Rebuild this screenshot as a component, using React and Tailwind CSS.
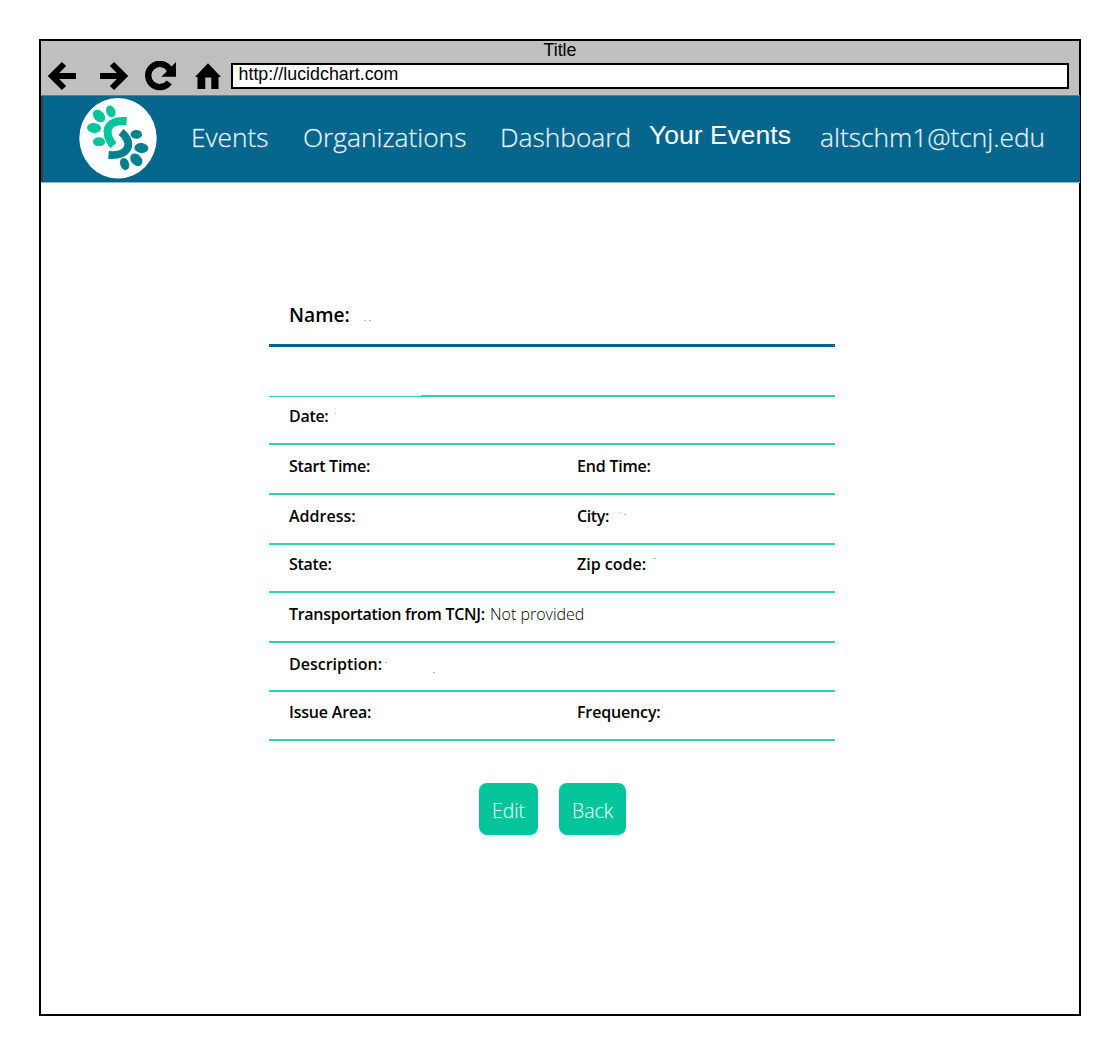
const NAV = "font-['Open_Sans'] font-light text-[26.3px] leading-[36px] text-white/90 whitespace-nowrap [-webkit-text-stroke:0.35px_rgba(255,255,255,0.6)]";

function BrowserIcon({ className, viewBox, children }) {
  return (
    <svg className={className} viewBox={viewBox} fill="none" stroke="#000" strokeWidth="6">
      {children}
    </svg>
  );
}

function Logo() {
  return (
    <svg className="h-[82px] w-[80px] shrink-0" viewBox="78 97 80 82">
      <ellipse cx="118" cy="138.2" rx="38.7" ry="40.3" fill="#fff" />
      <g fill="#03c49b">
        <ellipse cx="99" cy="116" rx="5.2" ry="7.1" transform="rotate(-42 99 116)" />
        <ellipse cx="110.8" cy="111.5" rx="4.5" ry="6.2" transform="rotate(-22 110.8 111.5)" />
        <ellipse cx="94" cy="128" rx="7" ry="5" transform="rotate(6 94 128)" />
        <ellipse cx="99" cy="141.7" rx="6.1" ry="4.5" />
      </g>
      <path d="M126.7 121C112.500 120 107.3 125.5 107.600 132Q108 139.500 113.500 145.500" fill="none" stroke="#03c49b" strokeWidth="8" />
      <g fill="#028090">
        <ellipse cx="136.3" cy="134.4" rx="5.7" ry="4.3" />
        <ellipse cx="141.4" cy="148" rx="7" ry="5" transform="rotate(6 141.4 148)" />
        <ellipse cx="136.3" cy="159.8" rx="5.2" ry="7.1" transform="rotate(-42 136.3 159.8)" />
        <ellipse cx="124.6" cy="164" rx="4.4" ry="6.2" transform="rotate(-20 124.6 164)" />
      </g>
      <path d="M121 132C128 137.500 130.200 144.500 126.700 149.500Q122 156 108.500 155" fill="none" stroke="#028090" strokeWidth="7.8" />
    </svg>
  );
}

function Label({ children, className = "" }) {
  return <span className={`font-semibold whitespace-nowrap ${className}`}>{children}</span>;
}

// Tiny residue of an erased value, drawn over the row.
function Speck({ className }) {
  return <i className={`absolute h-px w-[2px] bg-[#c4b8ac] ${className}`} />;
}

function Row({ className, children }) {
  return (
    <div className={`relative flex border-b-2 border-[#35cfae] pl-[20px] text-[16px] leading-[20px] text-black ${className}`}>
      {children}
    </div>
  );
}

export default function App() {
  return (
    <div className="h-[1055px] w-[1120px] bg-white pt-[39px] pl-[39px] font-['Open_Sans',sans-serif]">
      <div className="h-[977px] w-[1042px] border-2 border-black">
        <div className="h-[54px] bg-[#bfbfbf] font-['Liberation_Sans',sans-serif] text-[17.78px] text-black">
          <div className="h-[22px] pt-[1px] pl-[502.5px] leading-[16px]"><span>Title</span></div>
          <div className="flex">
            <BrowserIcon className="ml-[6px] mt-[-2px] h-[30px] w-[30px] shrink-0" viewBox="47 61 30 30">
              <path d="M76 76H52M64 64L52 76L64 88" />
            </BrowserIcon>
            <BrowserIcon className="ml-[22px] mt-[-2px] h-[30px] w-[30px] shrink-0" viewBox="99 61 30 30">
              <path d="M100 76H124M112 64L124 76L112 88" />
            </BrowserIcon>
            <BrowserIcon className="ml-[15px] mt-[-2px] h-[30px] w-[34px] shrink-0" viewBox="144 61 34 30">
              <path d="M169.200 82.300A11.600 11.600 0 1 1 169.800 69.600" strokeWidth="6.4" />
              <path d="M176 62V76.700H161.300Z" fill="#000" stroke="none" />
            </BrowserIcon>
            <BrowserIcon className="ml-[16px] mt-[-2px] h-[30px] w-[30px] shrink-0" viewBox="194 61 30 30">
              <path d="M208 63.300L221 77H218.500V89H211.300V77.500H205.300V89H197.500V77H195Z" fill="#000" stroke="none" />
            </BrowserIcon>
            <div className="ml-[7px] h-[26px] w-[838px] border-2 border-black bg-white pl-[5.5px] leading-[18px]">
              <span className="tracking-[0.04px]">http://lucidchart.com</span>
            </div>
          </div>
        </div>
        <div className="mr-[-1px] flex h-[88px] border-t border-b border-t-[#4a87a5] border-b-[#8fbace] bg-[#05668d]">
          <div className="w-[2px] bg-[#3a3d40]" />
          <div className="ml-[35px] mt-[1px] w-[80px]"><Logo /></div>
          <div className={`ml-[33px] mt-[23px] w-[112px] ${NAV}`}><span>Events</span></div>
          <div className={`mt-[23px] w-[197px] ${NAV}`}><span>Organizations</span></div>
          <div className={`mt-[23px] w-[149px] ${NAV}`}><span>Dashboard</span></div>
          <div className="mt-[24px] w-[171px] font-['Liberation_Sans'] text-[26.5px] leading-[30px] whitespace-nowrap text-white"><span>Your Events</span></div>
          <div className={`mt-[23px] ${NAV}`}><span>altschm1@tcnj.edu</span></div>
        </div>

        <div className="ml-[228px] w-[566px] pt-[119px]">
          <div className="relative h-[45px] border-b-[3px] border-[#05668d] pl-[20px] text-[19.2px] leading-[25px]">
            <Label>Name:</Label>
            <Speck className="top-[18px] left-[95px]" />
            <Speck className="top-[18px] left-[100px]" />
          </div>
          <div className="flex h-[50px]">
            <div className="w-[152px] border-b border-[#35cfae]" />
            <div className="flex-1 border-b-2 border-[#35cfae]" />
          </div>
          <Row className="h-[48px] pt-[9px]"><Label className="tracking-[-0.3px]">Date:</Label><Speck className="top-[16px] left-[66px] h-[2px] w-px" /></Row>
          <Row className="h-[50px] pt-[11px]"><div className="w-[288px]"><Label className="tracking-[-0.28px]">Start Time:</Label></div><Label className="tracking-[-0.2px]">End Time:</Label></Row>
          <Row className="h-[50px] pt-[11px]"><div className="w-[288px]"><Label>Address:</Label></div><Label className="tracking-[-0.4px]">City:</Label><Speck className="top-[17px] left-[351px] h-[2px] w-px" /><Speck className="top-[19px] left-[355px]" /></Row>
          <Row className="h-[48px] pt-[9px]"><div className="w-[288px]"><Label className="tracking-[-0.3px]">State:</Label></div><Label>Zip code:</Label><Speck className="top-[13px] left-[384px] h-px w-[3px] bg-[#444444]" /></Row>
          <Row className="h-[50px] pt-[11px]"><div className="w-[201px]"><Label className="tracking-[-0.29px]">Transportation from TCNJ:</Label></div><span className="font-light">Not provided</span></Row>
          <Row className="h-[49px] pt-[11px]"><Label>Description:</Label><Speck className="top-[19px] left-[116px]" /><Speck className="top-[29px] left-[164px]" /></Row>
          <Row className="h-[49px] pt-[10px]"><div className="w-[288px]"><Label className="tracking-[-0.2px]">Issue Area:</Label></div><Label className="tracking-[-0.15px]">Frequency:</Label></Row>
        </div>

        <div className="mt-[42px] ml-[438px] flex gap-[21px] text-[19.4px] font-light text-white/90 [-webkit-text-stroke:0.25px_rgba(255,255,255,0.5)]">
          <button className="h-[52px] w-[59px] rounded-[8px] bg-[#03c49b] pt-[3px]">Edit</button>
          <button className="h-[52px] w-[67px] rounded-[8px] bg-[#03c49b] pt-[3px]">Back</button>
        </div>
      </div>
    </div>
  );
}
